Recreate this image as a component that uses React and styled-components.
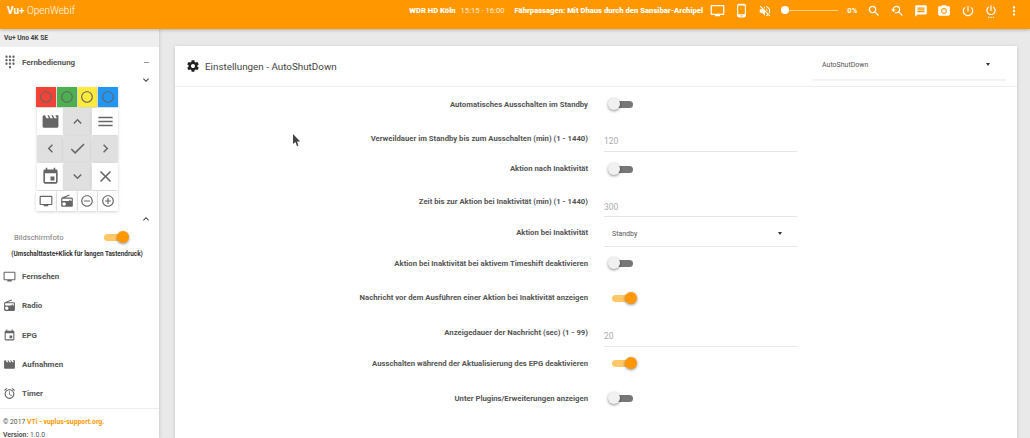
import React from 'react'
import styled, { createGlobalStyle } from 'styled-components'

const paths = {
  tv: 'M21 3H3c-1.1 0-2 .9-2 2v12c0 1.1.9 2 2 2h5v2h8v-2h5c1.1 0 1.99-.9 1.99-2L23 5c0-1.1-.9-2-2-2zm0 14H3V5h18v12z',
  phone: 'M16 1H8C6.34 1 5 2.34 5 4v16c0 1.66 1.34 3 3 3h8c1.66 0 3-1.34 3-3V4c0-1.66-1.34-3-3-3zm-2 20h-4v-1h4v1zm3.25-3H6.75V4h10.5v14z',
  mute: 'M16.5 12c0-1.77-1.02-3.29-2.5-4.03v2.21l2.45 2.45c.03-.2.05-.41.05-.63zm2.5 0c0 .94-.2 1.82-.54 2.64l1.51 1.51C20.63 14.91 21 13.5 21 12c0-4.28-2.99-7.86-7-8.77v2.06c2.89.86 5 3.54 5 6.71zM4.27 3L3 4.27 7.73 9H3v6h4l5 5v-6.73l4.25 4.25c-.67.52-1.42.93-2.25 1.18v2.06c1.38-.31 2.63-.95 3.69-1.81L19.73 21 21 19.73l-9-9L4.27 3zM12 4L9.91 6.09 12 8.18V4z',
  search: 'M15.5 14h-.79l-.28-.27C15.41 12.59 16 11.11 16 9.5 16 5.91 13.09 3 9.5 3S3 5.91 3 9.5 5.91 16 9.5 16c1.61 0 3.09-.59 4.23-1.57l.27.28v.79l5 4.99L20.49 19l-4.99-5zm-6 0C7.01 14 5 11.99 5 9.5S7.01 5 9.5 5 14 7.01 14 9.5 11.99 14 9.5 14z',
  find: 'M17.01 14h-.8l-.27-.27c.98-1.14 1.57-2.61 1.57-4.23 0-3.59-2.91-6.5-6.5-6.5s-6.5 3-6.5 6.5H2l3.84 4 4.16-4H6.51C6.51 7 8.53 5 11.01 5s4.5 2.01 4.5 4.5c0 2.48-2.02 4.5-4.5 4.5-.65 0-1.26-.14-1.82-.38L7.71 15.1c.97.57 2.09.9 3.3.9 1.61 0 3.08-.59 4.22-1.57l.27.27v.79l5.01 4.99L22 19l-4.99-5z',
  message: 'M20 2H4c-1.1 0-1.99.9-1.99 2L2 22l4-4h14c1.1 0 2-.9 2-2V4c0-1.1-.9-2-2-2zm-2 12H6v-2h12v2zm0-3H6V9h12v2zm0-3H6V6h12v2z',
  camera: 'M9 2L7.17 4H4c-1.1 0-2 .9-2 2v12c0 1.1.9 2 2 2h16c1.1 0 2-.9 2-2V6c0-1.1-.9-2-2-2h-3.17L15 2H9zm3 15c-2.76 0-5-2.24-5-5s2.24-5 5-5 5 2.24 5 5-2.24 5-5 5zm0-8.2a3.2 3.2 0 1 0 0 6.4 3.2 3.2 0 0 0 0-6.4z',
  power: 'M13 3h-2v10h2V3zm4.83 2.17l-1.42 1.42C17.99 7.86 19 9.81 19 12c0 3.87-3.13 7-7 7s-7-3.13-7-7c0-2.19 1.01-4.14 2.58-5.42L6.17 5.17C4.23 6.82 3 9.26 3 12c0 4.97 4.03 9 9 9s9-4.03 9-9c0-2.74-1.23-5.18-3.17-6.83z',
  powerSettings: 'M7 24h2v-2H7v2zm4 0h2v-2h-2v2zm2-22h-2v10h2V2zm3.56 2.44l-1.45 1.45C16.84 6.94 18 8.83 18 11c0 3.31-2.69 6-6 6s-6-2.69-6-6c0-2.17 1.16-4.06 2.88-5.12L7.44 4.44C5.36 5.88 4 8.28 4 11c0 4.42 3.58 8 8 8s8-3.58 8-8c0-2.72-1.36-5.12-3.44-6.56zM15 24h2v-2h-2v2z',
  more: 'M12 8c1.1 0 2-.9 2-2s-.9-2-2-2-2 .9-2 2 .9 2 2 2zm0 2c-1.1 0-2 .9-2 2s.9 2 2 2 2-.9 2-2-.9-2-2-2zm0 6c-1.1 0-2 .9-2 2s.9 2 2 2 2-.9 2-2-.9-2-2-2z',
  settings: 'M19.43 12.98c.04-.32.07-.64.07-.98s-.03-.66-.07-.98l2.11-1.65c.19-.15.24-.42.12-.64l-2-3.46c-.12-.22-.39-.3-.61-.22l-2.49 1c-.52-.4-1.08-.73-1.69-.98l-.38-2.65C14.46 2.18 14.25 2 14 2h-4c-.25 0-.46.18-.49.42l-.38 2.65c-.61.25-1.17.59-1.69.98l-2.49-1c-.23-.09-.49 0-.61.22l-2 3.46c-.13.22-.07.49.12.64l2.11 1.65c-.04.32-.07.65-.07.98s.03.66.07.98l-2.11 1.65c-.19.15-.24.42-.12.64l2 3.46c.12.22.39.3.61.22l2.49-1c.52.4 1.08.73 1.69.98l.38 2.65c.03.24.24.42.49.42h4c.25 0 .46-.18.49-.42l.38-2.65c.61-.25 1.17-.59 1.69-.98l2.49 1c.23.09.49 0 .61-.22l2-3.46c.12-.22.07-.49-.12-.64l-2.11-1.65zM12 15.5c-1.93 0-3.5-1.57-3.5-3.5s1.57-3.5 3.5-3.5 3.5 1.57 3.5 3.5-1.57 3.5-3.5 3.5z',
  dialpad: 'M12 19c-1.1 0-2 .9-2 2s.9 2 2 2 2-.9 2-2-.9-2-2-2zM6 1c-1.1 0-2 .9-2 2s.9 2 2 2 2-.9 2-2-.9-2-2-2zm0 6c-1.1 0-2 .9-2 2s.9 2 2 2 2-.9 2-2-.9-2-2-2zm0 6c-1.1 0-2 .9-2 2s.9 2 2 2 2-.9 2-2-.9-2-2-2zm12-8c1.1 0 2-.9 2-2s-.9-2-2-2-2 .9-2 2 .9 2 2 2zm-6 8c-1.1 0-2 .9-2 2s.9 2 2 2 2-.9 2-2-.9-2-2-2zm6 0c-1.1 0-2 .9-2 2s.9 2 2 2 2-.9 2-2-.9-2-2-2zm0-6c-1.1 0-2 .9-2 2s.9 2 2 2 2-.9 2-2-.9-2-2-2zm-6 0c-1.1 0-2 .9-2 2s.9 2 2 2 2-.9 2-2-.9-2-2-2zm0-6c-1.1 0-2 .9-2 2s.9 2 2 2 2-.9 2-2-.9-2-2-2z',
  radio: 'M3.24 6.15C2.51 6.43 2 7.17 2 8v12c0 1.1.89 2 2 2h16c1.11 0 2-.9 2-2V8c0-1.11-.89-2-2-2H8.3l8.26-3.34L15.88 1 3.24 6.15zM7 20c-1.66 0-3-1.34-3-3s1.34-3 3-3 3 1.34 3 3-1.34 3-3 3zm13-8h-2v-2h-2v2H4V8h16v4z',
  event: 'M17 12h-5v5h5v-5zM16 1v2H8V1H6v2H5c-1.11 0-1.99.9-1.99 2L3 19c0 1.1.89 2 2 2h14c1.1 0 2-.9 2-2V5c0-1.1-.9-2-2-2h-1V1h-2zm3 18H5V8h14v11z',
  movie: 'M18 4l2 4h-3l-2-4h-2l2 4h-3l-2-4H8l2 4H7L5 4H4c-1.1 0-1.99.9-1.99 2L2 18c0 1.1.9 2 2 2h16c1.1 0 2-.9 2-2V4h-4z',
  alarm: 'M22 5.72l-4.6-3.86-1.29 1.53 4.6 3.86L22 5.72zM7.88 3.39L6.6 1.86 2 5.71l1.29 1.53 4.59-3.85zM12.5 8H11v6l4.75 2.85.75-1.23-4-2.37V8zM12 4c-4.97 0-9 4.03-9 9s4.02 9 9 9c4.97 0 9-4.03 9-9s-4.03-9-9-9zm0 16c-3.87 0-7-3.13-7-7s3.13-7 7-7 7 3.13 7 7-3.13 7-7 7z',
  menu: 'M3 18h18v-2H3v2zm0-5h18v-2H3v2zm0-7v2h18V6H3z',
  left: 'M15.41 7.41L14 6l-6 6 6 6 1.41-1.41L10.83 12z',
  right: 'M10 6L8.59 7.41 13.17 12l-4.58 4.59L10 18l6-6z',
  up: 'M12 8l-6 6 1.41 1.41L12 10.83l4.59 4.58L18 14z',
  down: 'M16.59 8.59L12 13.17 7.41 8.59 6 10l6 6 6-6z',
  check: 'M9 16.17L4.83 12l-1.41 1.41L9 19 21 7l-1.41-1.41z',
  close: 'M19 6.41L17.59 5 12 10.59 6.41 5 5 6.41 10.59 12 5 17.59 6.41 19 12 13.41 17.59 19 19 17.59 13.41 12z',
  ring: 'M12 2C6.48 2 2 6.48 2 12s4.48 10 10 10 10-4.48 10-10S17.52 2 12 2zm0 18c-4.41 0-8-3.59-8-8s3.59-8 8-8 8 3.59 8 8-3.59 8-8 8z',
  minus: 'M7 11v2h10v-2H7zm5-9C6.48 2 2 6.48 2 12s4.48 10 10 10 10-4.48 10-10S17.52 2 12 2zm0 18c-4.41 0-8-3.59-8-8s3.59-8 8-8 8 3.59 8 8-3.59 8-8 8z',
  plus: 'M13 7h-2v4H7v2h4v4h2v-4h4v-2h-4V7zm-1-5C6.48 2 2 6.48 2 12s4.48 10 10 10 10-4.48 10-10S17.52 2 12 2zm0 18c-4.41 0-8-3.59-8-8s3.59-8 8-8 8 3.59 8 8-3.59 8-8 8z',
}

const Icon = ({ name, size = 16, color = 'currentColor' }) => (
  <svg width={size} height={size} viewBox="0 0 24 24" fill={color} style={{ display: 'block', flexShrink: 0 }}>
    <path d={paths[name]} />
  </svg>
)

const GlobalStyle = createGlobalStyle`
  html, body {
    margin: 0;
    height: 100%;
    overflow: hidden;
    background: #e9e9e9;
    font-family: Roboto, "Liberation Sans", sans-serif;
  }
`

const Page = styled.div`
  width: 1030px;
  height: 438px;
  display: flex;
  flex-direction: column;
  overflow: hidden;
`

const Header = styled.header`
  height: 29px;
  flex-shrink: 0;
  display: flex;
  align-items: flex-start;
  background: #ff9800;
  color: #fff;
  padding: 0 4px 0 7px;
  box-shadow: 0 1px 3px rgba(0, 0, 0, .25);
  position: relative;
  z-index: 2;
`

const Brand = styled.div`
  font-size: 10px;
  line-height: 21px;
  font-weight: 300;
  b { font-weight: 700; }
`

const Now = styled.div`
  margin-left: auto;
  display: flex;
  gap: 10px;
  font-size: 7.65px;
  font-weight: 700;
  line-height: 21px;
  margin-right: 3px;
  span { font-weight: 400; margin-left: -5px; opacity: .85; }
`

const HeadIcon = styled.div`
  width: 23.4px;
  height: 21px;
  display: flex;
  align-items: center;
  justify-content: center;
`

const Volume = styled.div`
  width: 57px;
  margin: 0 5px 0 5px;
  height: 21px;
  display: flex;
  align-items: center;
  position: relative;
  &::before {
    content: '';
    height: 1px;
    width: 100%;
    background: rgba(255, 255, 255, .55);
  }
  &::after {
    content: '';
    position: absolute;
    left: 0;
    top: 6px;
    width: 8px;
    height: 8px;
    border-radius: 50%;
    background: #fff;
  }
`

const Percent = styled.div`
  width: 18px;
  text-align: center;
  font-size: 7.5px;
  font-weight: 700;
  line-height: 21px;
  margin-right: 1px;
`

const Main = styled.div`
  flex: 1;
  display: flex;
  min-height: 0;
`

const Sidebar = styled.aside`
  width: 159px;
  flex-shrink: 0;
  background: #fff;
  box-shadow: 1px 0 3px rgba(0, 0, 0, .12);
  display: flex;
  flex-direction: column;
  color: #555;
  & > * { flex-shrink: 0; }
`

const Device = styled.div`
  height: 18px;
  line-height: 19px;
  background: #eee;
  padding-left: 4px;
  font-size: 6.6px;
  font-weight: 700;
  color: #444;
`

const NavTitle = styled.div`
  height: 30px;
  display: flex;
  align-items: center;
  padding: 0 4px 0 3px;
  font-size: 7.9px;
  font-weight: 700;
  span { margin-left: 5px; flex: 1; }
  i { width: 5px; height: 1px; background: #999; margin-right: 6px; }
`

const Chevron = styled.div`
  height: 11px;
  margin-top: ${p => p.$top || 0}px;
  display: flex;
  justify-content: flex-end;
  align-items: center;
  padding-right: 7px;
  color: #444;
`

const Remote = styled.div`
  width: 82px;
  margin: 2px 0 0 36px;
  display: flex;
  flex-direction: column;
  gap: 1px;
`

const ColorRow = styled.div`
  display: grid;
  grid-template-columns: repeat(4, 1fr);
  gap: 1px;
  height: 20px;
`

const ColorKey = styled.div`
  display: flex;
  align-items: center;
  justify-content: center;
  background: ${p => p.$bg};
  box-shadow: 0 1px 3px rgba(0, 0, 0, .2);
`

const KeyRow = styled.div`
  display: grid;
  grid-template-columns: 26px 27px 26px;
  gap: 1px;
  padding-left: 1px;
  height: 26.5px;
`

const Key = styled.div`
  display: flex;
  align-items: center;
  justify-content: center;
  background: ${p => (p.$grey ? '#e0e0e0' : '#fff')};
  box-shadow: 0 1px 3px rgba(0, 0, 0, .18);
  color: #666;
`

const SmallRow = styled(ColorRow)``

const SmallKey = styled(Key)``

const ShotRow = styled.div`
  display: flex;
  align-items: center;
  justify-content: space-between;
  height: 17px;
  margin-top: 4px;
  padding: 0 34px 0 14px;
  font-size: 7.6px;
  color: #777;
`

const Note = styled.div`
  font-size: 6.4px;
  font-weight: 700;
  text-align: center;
  color: #333;
  line-height: 12px;
  margin: 2px 0 2.5px;
  padding-right: 5px;
`

const NavList = styled.nav`
  display: flex;
  flex-direction: column;
`

const NavItem = styled.div`
  height: 29.3px;
  flex-shrink: 0;
  display: flex;
  align-items: center;
  gap: 6px;
  padding-left: 3px;
  font-size: 7.9px;
  font-weight: 700;
`

const Footer = styled.footer`
  margin-top: auto;
  border-top: 1px solid #eee;
  padding: 7px 0 0 3px;
  font-size: 6.8px;
  line-height: 13px;
  height: 30px;
  box-sizing: border-box;
  white-space: nowrap;
  b { color: #ff9800; }
`

const Content = styled.main`
  flex: 1;
  padding: 17px 13px 0 16px;
  min-width: 0;
`

const Card = styled.section`
  background: #fff;
  height: 420px;
  box-shadow: 0 1px 4px rgba(0, 0, 0, .16);
  position: relative;
`

const CardHeader = styled.div`
  height: 40px;
  display: flex;
  align-items: center;
  padding: 0 11px 0 11px;
  border-bottom: 1px solid #eee;
  color: #444;
`

const CardTitle = styled.h2`
  margin: 0 0 0 5px;
  flex: 1;
  font-size: 9.85px;
  font-weight: 400;
`

const HeadSelect = styled.div`
  width: 193px;
  height: 30px;
  box-sizing: border-box;
  border-bottom: 2px solid #f3f3f3;
  padding: 0 16px 1px 9px;
  display: flex;
  align-items: center;
  justify-content: space-between;
  font-size: 7px;
  color: #555;
`

const Caret = styled.i`
  width: 0;
  height: 0;
  border: 2px solid transparent;
  border-top: 3px solid #333;
  border-bottom: 0;
`

const Row = styled.div`
  height: ${p => p.$h}px;
  box-sizing: border-box;
  display: grid;
  grid-template-columns: 413px 193px;
  column-gap: 16px;
  align-items: center;
`

const Label = styled.label`
  text-align: right;
  font-size: 7.72px;
  font-weight: 700;
  color: #555;
  padding-bottom: ${p => p.$lift || 0}px;
  padding-top: ${p => p.$drop || 0}px;
`

const Field = styled.div`
  height: 100%;
  box-sizing: border-box;
  border-bottom: 1px solid #e6e6e6;
  display: flex;
  align-items: flex-end;
  justify-content: space-between;
  font-size: 8.5px;
  color: #aaa;
  padding-bottom: ${p => p.$pad ?? 5}px;
`

const SelectField = styled(Field)`
  align-items: center;
  padding: 4px 15px 0 8px;
  font-size: 7px;
  color: #555;
`

const Track = styled.div`
  position: relative;
  width: 21px;
  height: 7px;
  margin-left: ${p => p.$m ?? 8}px;
  border-radius: 4px;
  background: ${p => (p.$on ? '#ffc766' : '#777')};
  &::after {
    content: '';
    position: absolute;
    top: -3px;
    left: ${p => (p.$on ? 'auto' : '-4px')};
    right: ${p => (p.$on ? '-4px' : 'auto')};
    width: 12px;
    height: 12px;
    border-radius: 50%;
    background: ${p => (p.$on ? '#ff9800' : '#f1f1f1')};
    box-shadow: 0 1px 3px rgba(0, 0, 0, .45);
  }
`

const Pointer = styled.svg`
  position: absolute;
  left: 118px;
  top: 88px;
`

const rows = [
  { h: 35, label: 'Automatisches Ausschalten im Standby', toggle: false },
  { h: 30, label: 'Verweildauer im Standby bis zum Ausschalten (min) (1 - 1440)', value: '120', drop: 3 },
  { h: 34, label: 'Aktion nach Inaktivität', toggle: false, lift: 1 },
  { h: 31, label: 'Zeit bis zur Aktion bei Inaktivität (min) (1 - 1440)', value: '300', pad: 4 },
  { h: 30, label: 'Aktion bei Inaktivität', select: 'Standby' },
  { h: 33, label: 'Aktion bei Inaktivität bei aktivem Timeshift deaktivieren', lift: 1, toggle: false },
  { h: 36, label: 'Nachricht vor dem Ausführen einer Aktion bei Inaktivität anzeigen', lift: 1, toggle: true },
  { h: 31, label: 'Anzeigedauer der Nachricht (sec) (1 - 99)', value: '20', drop: 1 },
  { h: 33, label: 'Ausschalten während der Aktualisierung des EPG deaktivieren', lift: 1, toggle: true },
  { h: 36, label: 'Unter Plugins/Erweiterungen anzeigen', toggle: false },
]

const colorKeys = [
  { bg: '#f44336', ring: '#666' },
  { bg: '#4caf50', ring: '#666' },
  { bg: '#ffeb3b', ring: '#666' },
  { bg: '#2196f3', ring: '#666' },
]

const keyRows = [
  [{ icon: 'movie', size: 19 }, { icon: 'up', grey: true }, { icon: 'menu', size: 19 }],
  [{ icon: 'left', grey: true }, { icon: 'check', grey: true, size: 19 }, { icon: 'right', grey: true }],
  [{ icon: 'event', size: 19 }, { icon: 'down', grey: true }, { icon: 'close', size: 19 }],
]

const headIcons = ['search', 'find', 'message', 'camera', 'power', 'powerSettings', 'more']

const navItems = [
  { icon: 'tv', label: 'Fernsehen' },
  { icon: 'radio', label: 'Radio' },
  { icon: 'event', label: 'EPG' },
  { icon: 'movie', label: 'Aufnahmen' },
  { icon: 'alarm', label: 'Timer' },
]

export default function App() {
  return (
    <Page>
      <GlobalStyle />
      <Header>
        <Brand><b>Vu+</b> OpenWebif</Brand>
        <Now>
          <b>WDR HD Köln</b>
          <span>15:15 - 16:00</span>
          <b>Fährpassagen: Mit Dhaus durch den Sansibar-Archipel</b>
        </Now>
        <HeadIcon><Icon name="tv" size={15} /></HeadIcon>
        <HeadIcon><Icon name="phone" size={15} /></HeadIcon>
        <HeadIcon><Icon name="mute" size={14} /></HeadIcon>
        <Volume />
        <Percent>0%</Percent>
        {headIcons.map(name => (
          <HeadIcon key={name}><Icon name={name} size={14} /></HeadIcon>
        ))}
      </Header>
      <Main>
        <Sidebar>
          <Device>Vu+ Uno 4K SE</Device>
          <NavTitle>
            <Icon name="dialpad" size={14} color="#666" />
            <span>Fernbedienung</span>
            <i />
          </NavTitle>
          <Chevron $top={-3}><Icon name="down" size={12} /></Chevron>
          <Remote>
            <ColorRow>
              {colorKeys.map(k => (
                <ColorKey key={k.bg} $bg={k.bg}><Icon name="ring" size={14} color={k.ring} /></ColorKey>
              ))}
            </ColorRow>
            {keyRows.map((row, i) => (
              <KeyRow key={i}>
                {row.map((k, j) => (
                  <Key key={j} $grey={k.grey}><Icon name={k.icon} size={k.size || 17} /></Key>
                ))}
              </KeyRow>
            ))}
            <SmallRow>
              <SmallKey><Icon name="tv" size={14} /></SmallKey>
              <SmallKey><Icon name="radio" size={14} /></SmallKey>
              <SmallKey><Icon name="minus" size={14} /></SmallKey>
              <SmallKey><Icon name="plus" size={14} /></SmallKey>
            </SmallRow>
          </Remote>
          <Chevron $top={3}><Icon name="up" size={12} /></Chevron>
          <ShotRow>
            <span>Bildschirmfoto</span>
            <Track $on $m={0} />
          </ShotRow>
          <Note>(Umschalttaste+Klick für langen Tastendruck)</Note>
          <NavList>
            {navItems.map(item => (
              <NavItem key={item.label}>
                <Icon name={item.icon} size={13} color="#666" />
                {item.label}
              </NavItem>
            ))}
          </NavList>
          <Footer>
            © 2017 <b>VTi - vuplus-support.org.</b>
            <br />
            <strong>Version:</strong> 1.0.0
          </Footer>
        </Sidebar>
        <Content>
          <Card>
            <CardHeader>
              <Icon name="settings" size={14} color="#222" />
              <CardTitle>Einstellungen - AutoShutDown</CardTitle>
              <HeadSelect>AutoShutDown<Caret /></HeadSelect>
            </CardHeader>
            {rows.map(r => (
              <Row key={r.label} $h={r.h}>
                <Label $lift={r.lift} $drop={r.drop}>{r.label}</Label>
                {r.value && <Field $pad={r.pad}>{r.value}</Field>}
                {r.select && <SelectField>{r.select}<Caret /></SelectField>}
                {r.toggle !== undefined && <Track $on={r.toggle} />}
              </Row>
            ))}
            <Pointer width="8" height="12" viewBox="0 0 8 12">
              <path d="M0 0v10l2.4-2 1.6 4 1.5-.6L4 7.4h3.2z" fill="#444" />
            </Pointer>
          </Card>
        </Content>
      </Main>
    </Page>
  )
}
